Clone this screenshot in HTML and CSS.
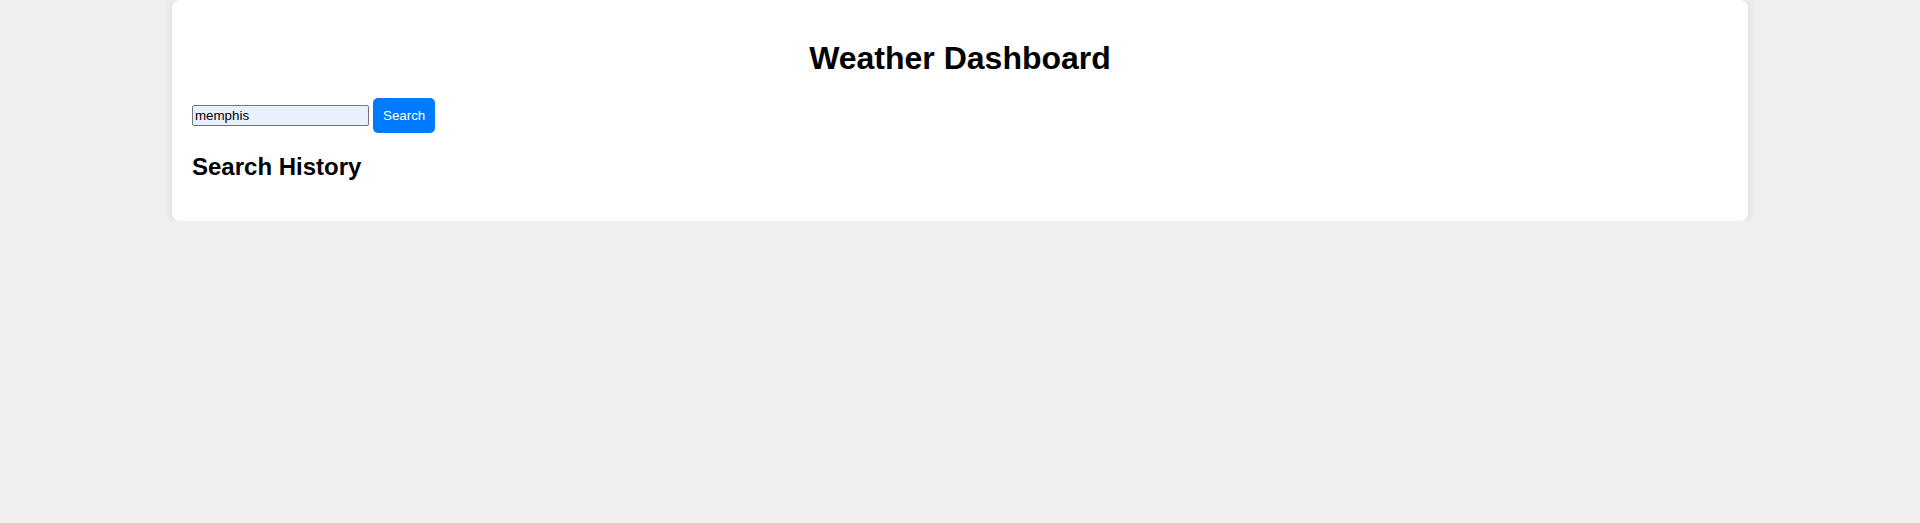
FILE: index.html
```html
<!DOCTYPE html>
<html lang="en">
<head>
<meta charset="UTF-8">
<title>Weather Dashboard</title>
<link rel="stylesheet" href="styles.css">
</head>
<body>
<div class="container">
  <h1 class="title">Weather Dashboard</h1>
  <div class="search-row">
    <input class="city-input" type="text" value="memphis">
    <button class="search-btn">Search</button>
  </div>
  <h2 class="history-title">Search History</h2>
  <div class="history-list"></div>
</div>
</body>
</html>
```
FILE: styles.css
```css
html, body {
  margin: 0;
  padding: 0;
}
body {
  background: #efefef;
  font-family: "Liberation Sans", Arial, sans-serif;
  color: #000;
}
.container {
  width: 80%;
  margin: 0 auto;
  padding: 20px;
  background: #fff;
  border-radius: 8px;
  box-shadow: 0 0 10px rgba(0, 0, 0, 0.1);
}
.title {
  text-align: center;
  font-size: 32px;
  margin: 19.5px 0 21.44px;
}
.search-row {
  display: flex;
  align-items: center;
  gap: 4px;
}
.city-input {
  box-sizing: border-box;
  width: 177px;
  height: 21px;
  padding: 1px 2px;
  border: 1px solid #767676;
  border-radius: 2px;
  background: #e8f0fe;
  font-family: "Liberation Sans", Arial, sans-serif;
  font-size: 13.333px;
  color: #000;
}
.search-btn {
  padding: 10px;
  border: none;
  border-radius: 5px;
  background: #007bff;
  color: #fff;
  font-family: "Liberation Sans", Arial, sans-serif;
  font-size: 13.333px;
  font-weight: 500;
  cursor: pointer;
}
.history-title {
  font-size: 24px;
  margin: 19.92px 0;
}
```
